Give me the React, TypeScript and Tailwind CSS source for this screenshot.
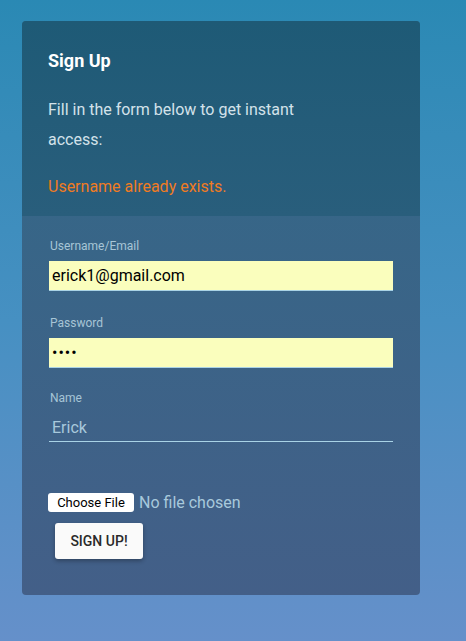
import React from "react";

export default function App() {
  return (
    <div
      className="w-[466px] h-[641px] overflow-hidden bg-gradient-to-b from-[#2a89b4] via-[#4690c2] to-[#6590ca] pt-[21px] pl-[22px]"
      style={{ fontFamily: "Roboto, 'Noto Sans', sans-serif" }}
    >
      <div className="w-[398px] h-[574px] rounded-[4px] overflow-hidden flex flex-col bg-gradient-to-b from-[#2f6987] to-[#435f88]">
        <div className="h-[195px] shrink-0 bg-gradient-to-b from-[#1e5a76] to-[#295e7c] px-[26px] pt-[28px]">
          <h1 className="text-[18px] leading-[24px] font-bold text-white">Sign Up</h1>
          <p className="mt-[22px] w-[270px] text-[16px] leading-[30px] text-[#d3e2ea]">
            Fill in the form below to get instant access:
          </p>
          <p className="mt-[22px] text-[16px] leading-[20px] text-[#f07b22]">Username already exists.</p>
        </div>
        <div className="flex flex-col pl-[27px] pr-[27px] pt-[22px]">
          <label className="text-[12px] leading-[16px] text-[#a7c5d6] pl-[1px]">Username/Email</label>
          <div className="mt-[7px] h-[30px] bg-[#fafebd] border-b-[1.5px] border-[#a9d3e6] flex items-center px-[3px] text-[16px] text-black">
            erick1@gmail.com
          </div>
          <label className="mt-[24px] text-[12px] leading-[16px] text-[#a7c5d6] pl-[1px]">Password</label>
          <div className="mt-[7px] h-[30px] bg-[#fafebd] border-b-[1.5px] border-[#a9d3e6] flex items-center px-[3px] text-[16px] text-black tracking-[1px]">
            ••••
          </div>
          <label className="mt-[22px] text-[12px] leading-[16px] text-[#a7c5d6] pl-[1px]">Name</label>
          <div className="mt-[10px] h-[26px] pt-[2px] border-b border-[#a9d3e6] px-[3px] text-[16px] leading-[20px] text-[#a8c9dc]">
            Erick
          </div>
          <div className="mt-[51px] -ml-[1px] h-[19px] flex items-center">
            <span className="h-[19px] w-[86px] rounded-[3px] bg-white text-[13px] text-black flex items-center justify-center">
              Choose File
            </span>
            <span className="ml-[5px] text-[16px] leading-[19px] text-[#a8c9dc]">No file chosen</span>
          </div>
          <div className="mt-[11px] ml-[6px] h-[36px] w-[88px] rounded-[3px] bg-[#fafafa] shadow-[0_2px_4px_rgba(0,0,0,0.3)] flex items-center justify-center text-[14px] font-medium text-[#2a2a2a]">
            SIGN UP!
          </div>
        </div>
      </div>
    </div>
  );
}
